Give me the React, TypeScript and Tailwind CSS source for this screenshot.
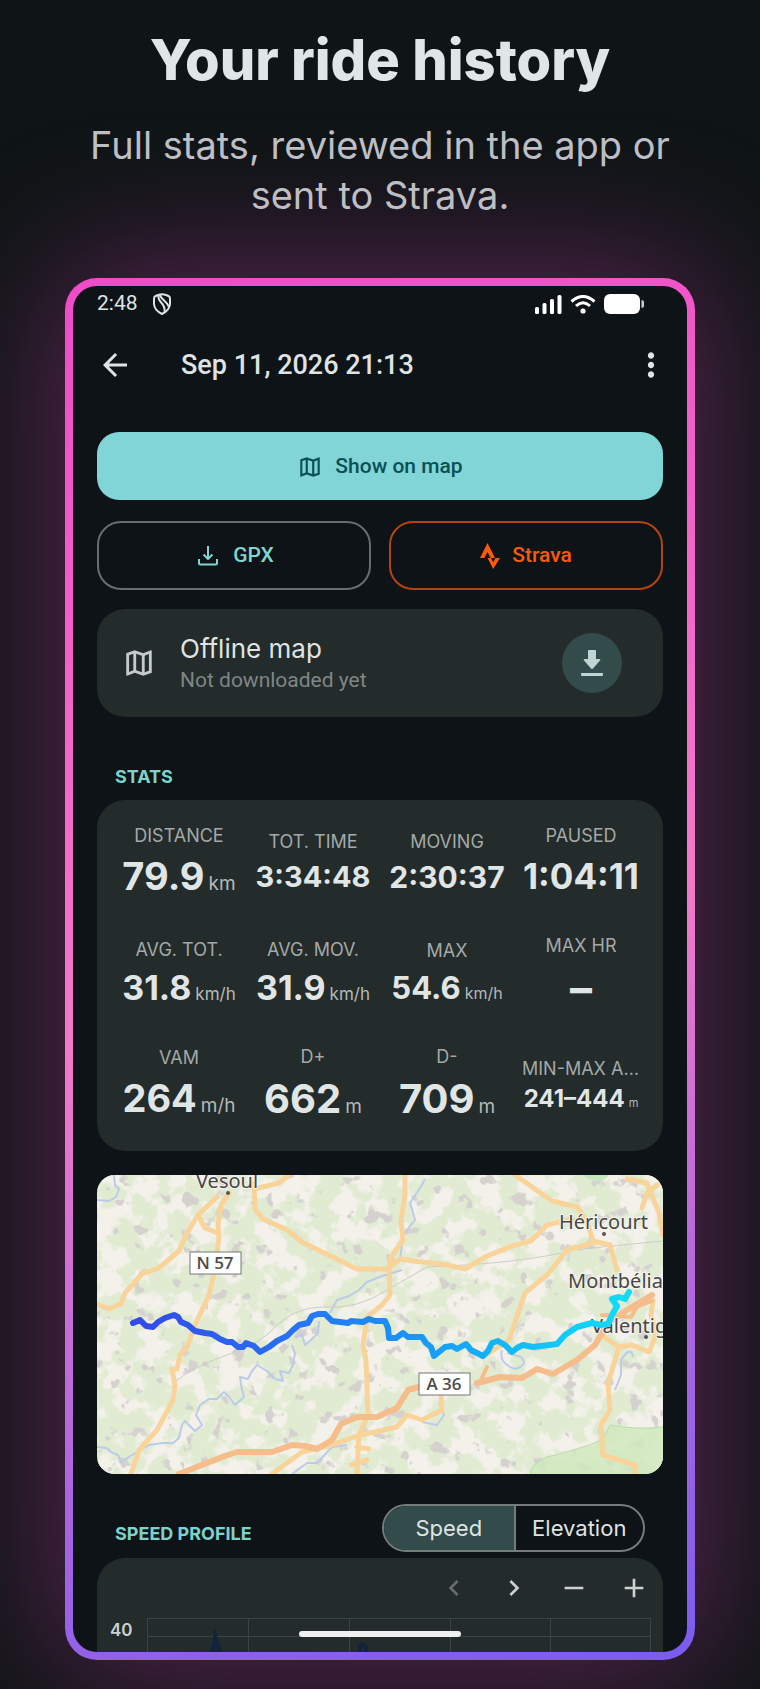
import React from "react";
import { MdArrowBack, MdOutlineMap, MdMoreVert, MdChevronLeft, MdChevronRight, MdRemove, MdAdd } from "react-icons/md";

type Stat = { label: string; value: string; unit?: string; size: string; unitSize?: string };

const STATS: Stat[] = [
  { label: "DISTANCE", value: "79.9", unit: "km", size: "text-[38px] leading-[57px]", unitSize: "text-[19px]" },
  { label: "TOT. TIME", value: "3:34:48", size: "text-[29px] leading-[46px]" },
  { label: "MOVING", value: "2:30:37", size: "text-[30px] leading-[46px]" },
  { label: "PAUSED", value: "1:04:11", size: "text-[35px] leading-[57px]" },
  { label: "AVG. TOT.", value: "31.8", unit: "km/h", size: "text-[34px] leading-[52px]", unitSize: "text-[17px]" },
  { label: "AVG. MOV.", value: "31.9", unit: "km/h", size: "text-[34px] leading-[52px]", unitSize: "text-[17px]" },
  { label: "MAX", value: "54.6", unit: "km/h", size: "text-[31px] leading-[49px]", unitSize: "text-[16px]" },
  { label: "MAX HR", value: "–", size: "text-[44px] leading-[60px]" },
  { label: "VAM", value: "264", unit: "m/h", size: "text-[38px] leading-[57px]", unitSize: "text-[19px]" },
  { label: "D+", value: "662", unit: "m", size: "text-[40px] leading-[60px]", unitSize: "text-[19px]" },
  { label: "D-", value: "709", unit: "m", size: "text-[40px] leading-[60px]", unitSize: "text-[19px]" },
  { label: "MIN-MAX ALT.", value: "241–444", unit: "m", size: "text-[24px] leading-[36px]", unitSize: "text-[11px]" },
];

function StatCell({ stat }: { stat: Stat }) {
  return (
    <div className="flex min-w-0 flex-col items-center justify-center px-2">
      <dt className="max-w-full truncate text-[18px] leading-6 text-[#a3a9a8]">{stat.label}</dt>
      <dd className={"whitespace-nowrap font-bold text-[#e0e6e5] " + stat.size}>
        {stat.value}
        {stat.unit && <span className={"ml-1 font-normal leading-none text-[#b4bab9] " + stat.unitSize}>{stat.unit}</span>}
      </dd>
    </div>
  );
}

function StatusBar() {
  return (
    <div className="flex h-9 items-center justify-between pl-6 pr-[43px] font-[Roboto,sans-serif] text-[21px] text-[#dfe3e3]">
      <div className="flex items-center gap-[15px]">
        <span>2:48</span>
        <svg width="18" height="22" viewBox="0 0 18 22" fill="none" stroke="currentColor" strokeWidth="2" strokeLinejoin="round">
          <path d="M2.500 3Q9-.5 15.500 3Q17 3.500 17 6V11Q16.500 17.500 9 21Q1.500 17.500 1 11V6Q1 3.500 2.500 3Z" />
          <path d="M5.500 2.500C4 10 13 9 11.500 19" />
          <path d="M7 2C8 7 14 8 16 14" />
        </svg>
      </div>
      <div className="flex items-center gap-2 text-white">
        <svg width="27" height="19" viewBox="0 0 27 19" fill="currentColor">
          <rect x="0" y="12" width="4" height="7" rx="1.500" />
          <rect x="7.500" y="8" width="4" height="11" rx="1.500" />
          <rect x="15" y="4" width="4" height="15" rx="1.500" />
          <rect x="22.500" y="0" width="4" height="19" rx="1.500" />
        </svg>
        <svg width="26" height="19" viewBox="0 0 26 19" fill="none" stroke="currentColor" strokeWidth="3">
          <path d="M1.500 6.500Q13-3.500 24.500 6.500" />
          <path d="M6 11Q13 4.500 20 11" />
          <circle cx="13" cy="16" r="2.600" fill="currentColor" stroke="none" />
        </svg>
        <svg width="40" height="20" viewBox="0 0 40 20" fill="currentColor">
          <rect width="36" height="20" rx="6" />
          <path d="M37.500 6Q40 6 40 8V12Q40 14 37.500 14Z" opacity=".8" />
        </svg>
      </div>
    </div>
  );
}

function RouteMap() {
  return (
    <svg viewBox="0 0 566 299" className="mt-6 block h-auto w-full rounded-[18px]" role="img" aria-label="Map of the ride">
      <defs>
        <linearGradient id="track" gradientUnits="userSpaceOnUse" x1="35" y1="0" x2="530" y2="0">
          <stop offset="0" stopColor="#3448e8" />
          <stop offset=".25" stopColor="#2b68f0" />
          <stop offset=".55" stopColor="#1b92f6" />
          <stop offset=".85" stopColor="#12c8f8" />
          <stop offset="1" stopColor="#10dcf8" />
        </linearGradient>
        <filter id="fields" x="0" y="0" width="100%" height="100%" colorInterpolationFilters="sRGB">
          <feTurbulence type="fractalNoise" baseFrequency=".042" numOctaves="4" seed="7" />
          <feColorMatrix values="0 0 0 0 .957  0 0 0 0 .945  0 0 0 0 .922  10 0 0 0 -4.800" />
        </filter>
        <filter id="villages" x="0" y="0" width="100%" height="100%" colorInterpolationFilters="sRGB">
          <feTurbulence type="fractalNoise" baseFrequency=".06" numOctaves="3" seed="23" />
          <feColorMatrix values="0 0 0 0 .83  0 0 0 0 .82  0 0 0 0 .81  0 14 0 0 -9.200" />
        </filter>
      </defs>
      <rect width="566" height="299" fill="#e0ebd2" />
      <rect width="566" height="299" filter="url(#fields)" />
      <rect width="566" height="299" filter="url(#villages)" />
      <path d="M566 252Q540 255 513 250L505 265Q480 275 450 282Q432 290 434 299H566Z" fill="#cfe8bd" opacity=".8" />
      <path d="M566 252Q540 255 513 250L505 265Q480 275 450 282Q432 290 434 299" fill="none" stroke="#b6dcae" />
      <path d="M485 0Q502 12 512 0Z" fill="#c6e6c0" />
      <g fill="none" stroke="#bccbe8" strokeWidth="2" strokeLinejoin="round">
        <path d="M17 0L18 10L22 14L19 22L12 26L0 25M0 272L10 273L14 277L21 280L24 287L40 277L52 270L66 268L76 268L82 263L85 250L88 246L98 256L105 250L99 240L103 230L112 224L120 224L127 217L132 222L138 230L147 222L144 210L143 202L151 204L155 196L160 190L170 196L178 204L186 206L183 196L192 198L196 190L198 178L195 170M198 162L205 160L208 170L213 166L221 158L222 146" />
        <path d="M233 138L240 125L252 121L262 115L270 107L285 101L305 95M303 85L306 60L318 45L313 28L325 10L328 4M195 299L210 288L220 288L235 272L250 270M325 247L340 250L347 240L342 228M405 175Q401 188 418 194Q432 190 424 182L410 178M518 215L524 200L524 185Q534 170 536 182" />
      </g>
      <g fill="none" stroke="#d0cbc8" strokeWidth="1">
        <path d="M78 207Q95 192 135 178Q165 168 180 150Q200 132 225 132Q260 135 290 115L330 92Q430 88 475 75L566 66" />
      </g>
      <g fill="none" stroke="#f8d49b" strokeWidth="5" strokeLinejoin="round" strokeLinecap="round">
        <path d="M0 129L12 134L24 129L28 118L45 99L62 93L82 76L90 58L101 40L120 22M132 18L124 30L121 50L122 62L118 95L112 120L98 150L90 172L83 180L80 194L75 194L78 210L76 225L60 255L42 275L34 299" />
        <path d="M101 40L108 53L121 58M157 8L158 34L166 44L190 55L205 67L260 94L292 94L294 82L306 65L304 45L308 20L308 0M192 0L182 8L157 14M292 94L293 120L285 130L270 142L266 170L269 185L271 240L262 260L260 299M175 299L205 277L235 270L260 261L300 252L310 240L325 245L345 235L344 222" />
        <path d="M293 92L303 84L325 87L345 89L368 94L388 82L415 71L434 66L450 50L470 45L490 46M418 0L455 26L480 32L490 46L496 66L513 70L520 95M386 182L412 165L428 118L450 100L470 75L496 68M545 33L550 18L560 10M530 4L550 8L562 38L566 60M504 160L522 172L511 208L513 235L504 250L506 280L538 290L538 299M522 172L535 170L552 177L559 160L554 140L556 125" />
        <path d="M260 272L272 274M254 290L270 285" />
      </g>
      <g fill="none" stroke="#f4bd8b" strokeWidth="6" strokeLinejoin="round" strokeLinecap="round">
        <path d="M82 299L128 281L140 277L175 277L195 270L208 271L220 274L235 265L244 249L260 242L280 242L300 233L311 215L322 212M380 208L403 202L425 203L440 194L456 199L480 185L498 170L511 148L530 135L555 120" />
        <path d="M384 205L390 192M505 140L534 142L542 128M534 134L555 126" strokeWidth="4" />
      </g>
      <g fill="#474747" stroke="#f5f3ec" strokeWidth="2" paintOrder="stroke" fontFamily="Noto Sans, sans-serif" fontSize="20">
        <text x="99" y="13">Vesoul</text>
        <text x="462" y="54">Héricourt</text>
        <text x="471" y="113">Montbéliard</text>
        <text x="494" y="158">Valentigney</text>
      </g>
      <g fill="#555">
        <circle cx="131" cy="18" r="2" />
        <circle cx="507" cy="59" r="2" />
        <circle cx="549" cy="162" r="2" />
      </g>
      <path
        d="M36 148L43 145L49 151L56 152L61 147L68 143L77 140L81 142L84 147L91 150L98 156L108 158L115 159L123 164L130 167L135 167L141 172L146 172L149 168L157 171L163 177L172 172L180 166L190 161L196 155L202 150L211 148L215 141L221 139L228 139L235 146L251 148L254 146L266 147L272 144L278 146H288L291 153L292 163L299 163L306 158L311 162H325L329 168L334 172L337 181L342 177L348 172L355 171L360 174L369 169L374 175L386 181L391 176L395 168L401 166L408 170L415 177L420 173L426 170L436 172L460 169L468 160L480 152L495 148L504 150L511 149L515 140L520 131L515 124L522 122L528 124L532 117"
        fill="none"
        stroke="url(#track)"
        strokeWidth="6"
        strokeLinejoin="round"
        strokeLinecap="round"
      />
      <g fill="#fff" stroke="#777" strokeWidth="1">
        <rect x="93" y="77" width="51" height="22" />
        <rect x="322" y="198" width="51" height="22" />
      </g>
      <g fill="#4c4c4c" fontFamily="Open Sans, sans-serif" fontSize="17" fontWeight="600" textAnchor="middle">
        <text x="118" y="94">N 57</text>
        <text x="347" y="215">A 36</text>
      </g>
    </svg>
  );
}

function SpeedChart() {
  return (
    <svg viewBox="0 0 566 34" className="block h-auto w-full" role="img" aria-label="Speed chart">
      <g stroke="#3c4343" strokeWidth="1" fill="none">
        <path d="M50 .5H554M50 18.500H554M50.500 0V34M151.500 0V34M252.500 0V34M353.500 0V34M453.500 0V34M553.500 0V34" />
      </g>
      <path d="M112 34L115 26L117 12L119 12L121 22L126 34ZM261 34V26Q266 22 271 27V34H267V29H265V34Z" fill="#13233d" />
      <text x="13" y="18" fill="#cdd2d1" fontFamily="Inter, sans-serif" fontSize="17" fontWeight="600">40</text>
    </svg>
  );
}

export default function App() {
  const [mode, setMode] = React.useState<"speed" | "elevation">("speed");
  return (
    <main className="min-h-screen overflow-hidden bg-[#0f1516] px-[65px] pb-[29px] pt-7 font-[Inter,sans-serif]">
      <header className="relative z-10 text-center">
        <h1 className="text-[56px] font-extrabold leading-[64px] text-[#e0e6e5]">Your ride history</h1>
        <p className="mx-auto mt-7 max-w-[620px] text-[38px] leading-[50px] text-[#bdbfc4]">
          Full stats, reviewed in the app or sent to Strava.
        </p>
      </header>
      <section className="mt-[58px] rounded-[32px] bg-[linear-gradient(165deg,#ef4bc8_0%,#f27ac8_50%,#a765e0_80%,#7a5cf0_100%)] p-2 shadow-[0_0_140px_14px_rgba(200,60,170,0.4)]">
        <div className="relative overflow-hidden rounded-[24px] bg-[#0d1316]">
          <StatusBar />
          <div className="flex h-[86px] items-center pl-6 pr-[21px] text-[#dfe3e3]">
            <button aria-label="Back">
              <MdArrowBack size={36} />
            </button>
            <h2 className="ml-12 flex-1 font-[Roboto,sans-serif] text-[27px] font-medium">Sep 11, 2026 21:13</h2>
            <button aria-label="More options">
              <MdMoreVert size={38} className="-mr-1" />
            </button>
          </div>
          <div className="px-6 pt-6 font-[Roboto,sans-serif]">
            <button className="flex h-[68px] w-full items-center justify-center gap-3 rounded-[22px] bg-[#82d5d7] pt-px text-[21px] font-medium text-[#0b5054]">
              <MdOutlineMap size={26} />
              Show on map
            </button>
            <div className="mt-[21px] grid grid-cols-2 gap-[18px]">
              <button className="flex h-[69px] items-center justify-center gap-[15px] rounded-[24px] border-2 border-[#686e6f] pl-1 pt-px text-[21px] font-medium text-[#80d5cf]">
                <svg width="20" height="20" viewBox="0 0 20 20" fill="none" stroke="currentColor" strokeWidth="2" strokeLinejoin="round">
                  <path d="M10 0V13M5.500 8.500L10 13L14.500 8.500M1 13V17Q1 18.500 2.500 18.500H17.500Q19 18.500 19 17V13" />
                </svg>
                GPX
              </button>
              <button className="flex h-[69px] items-center justify-center gap-3 rounded-[24px] border-2 border-[#b4450f] pt-px text-[21px] font-medium text-[#fc5a0c]">
                <svg width="20" height="26" viewBox="0 0 20 26" fill="currentColor">
                  <path d="M7.500 0L0 15H4.400L7.500 9L10.600 15H15Z" />
                  <path d="M7.500 15H11L13.200 19.300L15.500 15H20L13.200 26Z" />
                </svg>
                Strava
              </button>
            </div>
            <div className="mt-[19px] flex h-[108px] items-center rounded-[28px] bg-[#242b2b] pl-[25px] pr-[41px]">
              <MdOutlineMap size={34} className="text-[#c5cbca]" />
              <div className="ml-6 flex-1">
                <h3 className="font-[Inter,sans-serif] text-[26px] leading-[34px] text-[#dfe4e3]">Offline map</h3>
                <p className="text-[21px] leading-[28px] text-[#7f8685]">Not downloaded yet</p>
              </div>
              <button aria-label="Download map" className="flex size-[60px] items-center justify-center rounded-full bg-[#334b4b] text-[#c0d5d3]">
                <svg width="22" height="27" viewBox="0 0 22 27" fill="currentColor">
                  <path d="M7 1Q7 0 8 0H14Q15 0 15 1V9H18.500Q20 9 19 10.500L12 18.500Q11 19.500 10 18.500L3 10.500Q2 9 3.500 9H7Z" />
                  <rect y="23" width="22" height="3" rx="1" />
                </svg>
              </button>
            </div>
          </div>
          <div className="px-6">
            <h3 className="mt-12 pl-[18px] text-[18px] font-bold leading-6 text-[#7dd2cb]">STATS</h3>
            <dl className="mt-[11px] grid auto-rows-[111px] grid-cols-4 rounded-[28px] bg-[#242b2b] px-[15px] py-[9px]">
              {STATS.map((s) => (
                <StatCell key={s.label} stat={s} />
              ))}
            </dl>
            <RouteMap />
            <div className="mt-[30px] flex h-12 items-center justify-between pl-[18px] pr-[18px]">
              <h3 className="mt-[11px] text-[18px] font-bold leading-6 text-[#7dd2cb]">SPEED PROFILE</h3>
              <div className="grid h-12 w-[263px] grid-cols-2 overflow-hidden rounded-[24px] border-2 border-[#747b7b] text-[22px] text-[#dfe4e3]">
                <button
                  aria-pressed={mode === "speed"}
                  onClick={() => setMode("speed")}
                  className={mode === "speed" ? "bg-[#334b4b]" : ""}
                >
                  Speed
                </button>
                <button
                  aria-pressed={mode === "elevation"}
                  onClick={() => setMode("elevation")}
                  className={mode === "elevation" ? "border-l-2 border-[#747b7b] bg-[#334b4b]" : "border-l-2 border-[#747b7b]"}
                >
                  Elevation
                </button>
              </div>
            </div>
            <div className="mt-[6px] rounded-t-[28px] bg-[#242b2b]">
              <div className="flex h-[60px] items-center justify-end gap-7 pr-[13px] text-[#cdd2d1]">
                <button aria-label="Previous" className="text-[#686e6f]">
                  <MdChevronLeft size={32} />
                </button>
                <button aria-label="Next">
                  <MdChevronRight size={32} />
                </button>
                <button aria-label="Zoom out">
                  <MdRemove size={32} />
                </button>
                <button aria-label="Zoom in">
                  <MdAdd size={32} />
                </button>
              </div>
              <SpeedChart />
            </div>
          </div>
          <div className="absolute bottom-[15px] left-1/2 h-[6px] w-[162px] -translate-x-1/2 rounded-full bg-[#eff0f0]" />
        </div>
      </section>
    </main>
  );
}
